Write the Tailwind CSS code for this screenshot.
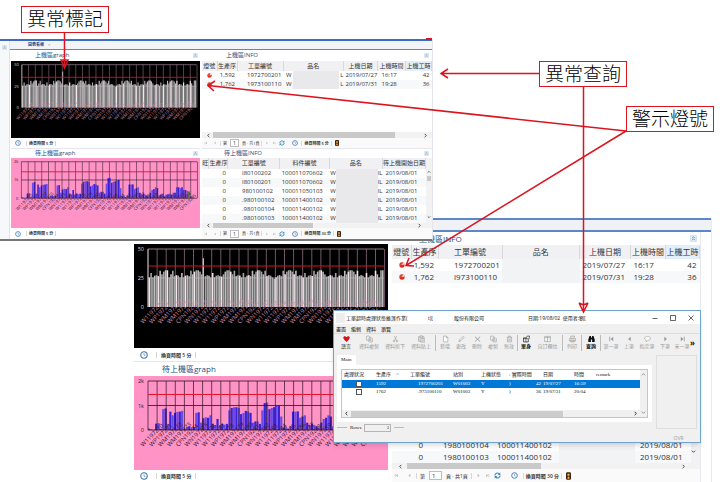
<!DOCTYPE html>
<html lang="zh-Hant">
<head>
  <meta charset="UTF-8" />
  <meta name="viewport" content="width=device-width, initial-scale=1" />
  <title>異常查詢 - 上機區看板</title>
  <script src="https://cdn.jsdelivr.net/npm/@tailwindcss/browser@4"></script>
</head>
<body class="bg-white font-['Open_Sans','Noto_Sans_CJK_TC',sans-serif] text-[#333]">
  <!-- Shared icons -->
  <svg class="hidden">
    <symbol id="i-clock" viewBox="0 0 12 12"><circle cx="6" cy="6" r="4.8" fill="#fff" stroke="#3f74b5" stroke-width="1.6"/><path d="M6 3.4V6.2L8 7" fill="none" stroke="#3f74b5" stroke-width="1"/></symbol>
    <symbol id="i-refresh" viewBox="0 0 12 12"><path d="M1.5 6A4.5 4.5 0 0 1 9 3M10.500 6A4.500 4.500 0 0 1 3 9" fill="none" stroke="#3b8fc4" stroke-width="1.9"/><path d="M10.800 .8V5H6.500zM1.200 11.200V7H5.500z" fill="#2f7db8"/></symbol>
    <symbol id="i-lamp" viewBox="0 0 12 12"><circle cx="6" cy="6" r="5.300" fill="#d9301c"/><path d="M6 6L8 1.200A5.300 5.300 0 0 1 11.200 5z" fill="#fbe3dc"/><circle cx="4.500" cy="4.500" r="1.600" fill="#f0785c"/></symbol>
    <symbol id="i-user" viewBox="0 0 8 12"><rect width="8" height="12" rx="2" fill="#3a2615"/><circle cx="4" cy="4" r="2" fill="#e9a23b"/><path d="M1.500 11V8.500L4 7L6.500 8.500V11z" fill="#b5402a"/><rect x="3" y="7" width="2" height="3" fill="#f3c64a"/></symbol>
    <symbol id="i-fold" viewBox="0 0 12 12"><rect x=".5" y=".5" width="11" height="11" rx="2" fill="#e2edf8" stroke="#bcd0e6"/><path d="M3.500 5.500L6 3L8.500 5.500M3.500 9L6 6.500L8.500 9" fill="none" stroke="#4f7db0" stroke-width="1.300"/></symbol>
    <symbol id="i-first" viewBox="0 0 12 12"><path d="M3 2V10" stroke="currentColor" stroke-width="1.400"/><path d="M9 2V10L4.500 6z" fill="currentColor"/></symbol>
    <symbol id="i-prev" viewBox="0 0 12 12"><path d="M8 2V10L3.500 6z" fill="currentColor"/></symbol>
    <symbol id="i-next" viewBox="0 0 12 12"><path d="M4 2V10L8.500 6z" fill="currentColor"/></symbol>
    <symbol id="i-last" viewBox="0 0 12 12"><path d="M9 2V10" stroke="currentColor" stroke-width="1.400"/><path d="M3 2V10L7.500 6z" fill="currentColor"/></symbol>
    <symbol id="i-left" viewBox="0 0 12 12"><path d="M8 2L4 6L8 10" fill="none" stroke="currentColor" stroke-width="2"/></symbol>
    <symbol id="i-right" viewBox="0 0 12 12"><path d="M4 2L8 6L4 10" fill="none" stroke="currentColor" stroke-width="2"/></symbol>
    <symbol id="i-up" viewBox="0 0 12 12"><path d="M2 8L6 4L10 8" fill="none" stroke="currentColor" stroke-width="2"/></symbol>
    <symbol id="i-down" viewBox="0 0 12 12"><path d="M2 4L6 8L10 4" fill="none" stroke="currentColor" stroke-width="2"/></symbol>
    <symbol id="i-copy" viewBox="0 0 12 12"><path d="M1 1H5.500L7 2.500V8H1zM5 4H9.500L11 5.500V11H5z" fill="#f4f4f4" stroke="currentColor"/><path d="M6.500 7H9.500M6.500 9H9.500" stroke="currentColor" stroke-width=".8"/></symbol>
  </svg>

  <main class="relative h-screen min-h-[482px] overflow-hidden">

    <!-- Enlarged dashboard -->
    <section class="absolute left-[132px] top-[218px] flex h-[264px] w-[580px] flex-col border-r border-[#e8e8ee] bg-white text-[8px] leading-[12px]">
      <div class="h-[2px] bg-[#5b87c7]"></div>
      <div class="h-[10px] bg-[#f0f1f5]"></div>
      <div class="h-[2px] bg-[#5b87c7]"></div>
      <div class="flex min-h-0 flex-1">
        <div class="flex w-[256px] flex-col pl-[2px] pt-[12px]">
          <svg data-chart="dark" viewBox="0 0 254 104" class="h-[104px] w-full bg-black"></svg>
          <div class="flex h-[13px] items-center gap-2 pl-[6px] text-[5px]">
            <svg class="size-2"><use href="#i-clock"/></svg>
            <span class="border-x border-[#d8d8d8] px-1 font-semibold leading-[6px]">換頁時間 5 分</span>
          </div>
          <h2 class="flex h-[15px] items-center border-t border-[#e6e6ea] pl-[28px] text-[#1d4f87]">待上機區graph</h2>
          <svg data-chart="pink" viewBox="0 0 254 94" class="h-[94px] w-full bg-[#ff93c6]"></svg>
          <div class="flex h-[12px] items-center gap-2 pl-[6px] text-[5px]">
            <svg class="size-2"><use href="#i-clock"/></svg>
            <span class="border-x border-[#d8d8d8] px-1 font-semibold leading-[6px]">換頁時間 5 分</span>
          </div>
        </div>
        <div class="ml-1 mr-[10px] flex flex-1 flex-col border-r border-[#e8e8ee]">
          <h2 class="flex h-[13px] items-center justify-between pl-[27px] pr-[3px] text-[#1d4f87]">上機區INFO
            <svg class="size-[7px]"><use href="#i-fold"/></svg>
          </h2>
          <table class="w-full table-fixed whitespace-nowrap">
            <thead class="bg-[#f1f1f3]">
              <tr class="h-[14px] [&>th]:border-r [&>th]:border-[#d9d9dc] [&>th]:font-normal">
                <th class="w-[19px]">燈號</th><th class="w-[27px]">生產序</th><th class="w-[64px]">工單編號</th><th>品名</th><th class="w-[51px]">上機日期</th><th class="w-[35px]">上機時間</th><th class="w-[34px] bg-[#e2eefa]">上機工時</th>
              </tr>
            </thead>
            <tbody>
              <tr>
                <td><svg class="mx-auto size-[6px]"><use href="#i-lamp"/></svg></td><td class="pr-1 text-right">1,592</td><td class="pl-4">1972700201</td><td class="bg-[#f2f3f5]"></td><td class="pl-[3px]">2019/07/27</td><td class="pl-[3px]">16:17</td><td class="pr-[3px] text-right">42</td>
              </tr>
              <tr class="bg-[#f7f8fa]">
                <td><svg class="mx-auto size-[6px]"><use href="#i-lamp"/></svg></td><td class="pr-1 text-right">1,762</td><td class="pl-4">l973100110</td><td class="bg-[#f2f3f5]"></td><td class="pl-[3px]">2019/07/31</td><td class="pl-[3px]">19:28</td><td class="pr-[3px] text-right">36</td>
              </tr>
            </tbody>
          </table>
          <div class="mt-auto flex">
            <table class="flex-1 table-fixed whitespace-nowrap">
              <tbody>
                <tr>
                  <td class="w-[31px] text-right">0</td><td class="w-[70px] pl-5">1980100104</td><td class="w-[66px] pl-1">100011400102</td><td class="w-[76px] bg-[#f2f3f5]"></td><td class="pl-[5px]">2019/08/01</td>
                </tr>
                <tr class="bg-[#f7f8fa]">
                  <td class="text-right">0</td><td class="pl-5">1980100103</td><td class="pl-1">100011400102</td><td class="bg-[#f2f3f5]"></td><td class="pl-[5px]">2019/08/01</td>
                </tr>
              </tbody>
            </table>
            <div class="flex w-[9px] items-center bg-[#f2f2f2]"><svg class="size-[5px]"><use href="#i-down"/></svg></div>
          </div>
          <div class="flex h-[6px] items-center bg-[#f2f2f2] pl-[6px] pr-[14px]">
            <svg class="size-[5px]"><use href="#i-left"/></svg>
            <div class="ml-1 h-[6px] w-[134px] bg-[#c9c9c9]"></div>
            <svg class="ml-auto size-[5px]"><use href="#i-right"/></svg>
          </div>
          <div class="flex h-[13px] items-center gap-1 bg-[#fafafa] pl-[2px] text-[5px] leading-[6px]">
            <button class="text-[#bbb]" aria-label="第一頁"><svg class="size-[5px]"><use href="#i-first"/></svg></button>
            <button class="ml-1 text-[#bbb]" aria-label="上一頁"><svg class="size-[5px]"><use href="#i-prev"/></svg></button>
            <label for="pageBig" class="border-l border-[#d8d8d8] pl-[3px]">第</label>
            <input id="pageBig" value="1" class="h-[9px] w-[13px] border border-[#bdbdbd] bg-white px-[2px] text-[6px]" />
            <span class="border-r border-[#d8d8d8] pr-[3px]">頁 · 共1頁</span>
            <button class="text-[#bbb]" aria-label="下一頁"><svg class="size-[5px]"><use href="#i-next"/></svg></button>
            <button class="text-[#bbb]" aria-label="最後頁"><svg class="size-[5px]"><use href="#i-last"/></svg></button>
            <button aria-label="重新整理"><svg class="size-[7px]"><use href="#i-refresh"/></svg></button>
            <svg class="ml-[6px] size-[7px]"><use href="#i-clock"/></svg>
            <span class="ml-px border-x border-[#d8d8d8] px-[2px] font-semibold">換頁時間 30 分</span>
            <svg class="h-2 w-[5px]"><use href="#i-user"/></svg>
          </div>
        </div>
      </div>
    </section>

    <!-- Dashboard overview -->
    <section class="absolute left-0 top-[39px] flex w-[433px] flex-col border-b-2 border-r border-b-[#777] border-r-[#e4e6ec] bg-white text-[6px] leading-[9px]">
      <div class="h-[2px] bg-[#3d6cc0]"></div>
      <div class="flex">
        <div class="w-[10px] border-r border-[#dfe3ea] bg-[#f7f8fa] pl-[2px] pt-1"><svg class="size-[5px]"><use href="#i-fold"/></svg></div>
        <div class="flex-1">
          <div class="flex h-[9px] items-center border-b border-[#5b87c7] bg-[#f3f4f7] pl-[18px]">
            <button class="flex items-center gap-1 text-[4px] font-bold leading-[8px] text-[#1d4f87]">圖表看板 <span class="font-normal text-[#789]">×</span></button>
          </div>
          <div class="flex">
            <div class="w-[190px] pl-px">
              <h2 class="flex h-[11px] items-center justify-between pl-6 pr-[2px] text-[#1d4f87]">上機區graph
                <svg class="size-[5px]"><use href="#i-fold"/></svg>
              </h2>
              <svg data-chart="dark" viewBox="0 0 254 104" class="h-[77px] w-full bg-black"></svg>
              <div class="flex h-[10px] items-center gap-[5px] pl-1 text-[4px]">
                <svg class="size-[6px]"><use href="#i-clock"/></svg>
                <span class="border-x border-[#d8d8d8] px-[2px] font-semibold leading-[5px]">換頁時間 5 分</span>
              </div>
              <h2 class="flex h-[10px] items-center justify-between border-t border-[#e6e6ea] pl-6 pr-[2px] text-[#1d4f87]">待上機區graph
                <svg class="size-[5px]"><use href="#i-fold"/></svg>
              </h2>
              <svg data-chart="pink" viewBox="0 0 254 94" class="h-[70px] w-full bg-[#ff93c6]"></svg>
              <div class="flex h-[11px] items-center gap-[5px] pl-1 text-[4px]">
                <svg class="size-[6px]"><use href="#i-clock"/></svg>
                <span class="border-x border-[#d8d8d8] px-[2px] font-semibold leading-[5px]">換頁時間 5 分</span>
              </div>
            </div>
            <div class="ml-[2px] flex flex-1 flex-col">
              <h2 class="flex h-[11px] items-center justify-between pl-6 pr-[3px] text-[#1d4f87]">上機區INFO
                <svg class="size-[5px]"><use href="#i-fold"/></svg>
              </h2>
              <table class="w-full table-fixed whitespace-nowrap">
                <thead class="bg-[#f1f1f3]">
                  <tr class="h-[10px] [&>th]:border-r [&>th]:border-[#d9d9dc] [&>th]:font-normal">
                    <th class="w-[15px]">燈號</th><th class="w-[20px]">生產序</th><th class="w-[46px]">工單編號</th><th>品名</th><th class="w-[34px]">上機日期</th><th class="w-[28px]">上機時間</th><th class="w-[26px] bg-[#e2eefa]">上機工時</th>
                  </tr>
                </thead>
                <tbody>
                  <tr>
                    <td><svg class="mx-auto size-[5px]"><use href="#i-lamp"/></svg></td><td class="pr-[2px] text-right">1,592</td><td class="pl-[10px]">1972700201</td><td><div class="flex gap-px pl-[3px]">W<span class="flex-1 bg-[#e9e9eb]"></span>L</div></td><td class="pl-[2px]">2019/07/27</td><td class="pl-1">16:17</td><td class="pr-[2px] text-right">42</td>
                  </tr>
                  <tr class="bg-[#f7f8fa]">
                    <td><svg class="mx-auto size-[5px]"><use href="#i-lamp"/></svg></td><td class="pr-[2px] text-right">1,762</td><td class="pl-[10px]">1973100110</td><td><div class="flex gap-px pl-[3px]">W<span class="flex-1 bg-[#e9e9eb]"></span>L</div></td><td class="pl-[2px]">2019/07/31</td><td class="pl-1">19:28</td><td class="pr-[2px] text-right">36</td>
                  </tr>
                </tbody>
              </table>
              <div class="mt-auto flex h-[6px] items-center bg-[#f2f2f2] px-1">
                <svg class="size-[5px]"><use href="#i-left"/></svg>
                <div class="ml-[2px] h-[6px] w-[182px] bg-[#c9c9c9]"></div>
                <svg class="ml-auto size-[5px]"><use href="#i-right"/></svg>
              </div>
              <div class="flex h-[10px] items-center gap-[3px] bg-[#fafafa] pl-[2px] text-[4px] leading-[5px]">
                <button class="text-[#bbb]" aria-label="第一頁"><svg class="size-1"><use href="#i-first"/></svg></button>
                <button class="ml-[2px] text-[#bbb]" aria-label="上一頁"><svg class="size-1"><use href="#i-prev"/></svg></button>
                <label for="pageTop" class="border-l border-[#d8d8d8] pl-[2px]">第</label>
                <input id="pageTop" value="1" class="h-[8px] w-[9px] border border-[#bdbdbd] bg-white px-[2px] text-[5px]" />
                <span class="border-r border-[#d8d8d8] pr-[2px]">頁 · 共1頁</span>
                <button class="text-[#bbb]" aria-label="下一頁"><svg class="size-1"><use href="#i-next"/></svg></button>
                <button class="text-[#bbb]" aria-label="最後頁"><svg class="size-1"><use href="#i-last"/></svg></button>
                <button aria-label="重新整理"><svg class="size-[6px]"><use href="#i-refresh"/></svg></button>
                <svg class="ml-1 size-[6px]"><use href="#i-clock"/></svg>
                <span class="border-x border-[#d8d8d8] px-[2px] font-semibold">換頁時間 5 分</span>
                <svg class="h-[6px] w-1"><use href="#i-user"/></svg>
              </div>
              <h2 class="flex h-[10px] items-center justify-between border-t border-[#e6e6ea] pl-[22px] pr-[3px] text-[#1d4f87]">待上機區INFO
                <svg class="size-[5px]"><use href="#i-fold"/></svg>
              </h2>
              <div class="flex">
                <table class="flex-1 table-fixed whitespace-nowrap">
                  <thead class="bg-[#f1f1f3]">
                    <tr class="h-[11px] [&>th]:border-r [&>th]:border-[#d9d9dc] [&>th]:font-normal">
                      <th class="w-[7px]">旺</th><th class="w-[18px]">生產序</th><th class="w-[52px]">工單編號</th><th class="w-[50px]">料件編號</th><th class="w-[56px]">品名</th><th>待上機開始日期</th>
                    </tr>
                  </thead>
                  <tbody>
                    <tr><td></td><td class="pr-[2px] text-right">0</td><td class="pl-[14px]">I80100202</td><td class="pl-[2px]">100011070602</td><td><div class="flex pl-px">W<span class="flex-1 bg-[#e9e9eb]"></span>IL</div></td><td class="pl-[3px]">2019/08/01</td></tr>
                    <tr class="bg-[#f7f8fa]"><td></td><td class="pr-[2px] text-right">0</td><td class="pl-[14px]">I80100201</td><td class="pl-[2px]">100011070602</td><td><div class="flex pl-px">W<span class="flex-1 bg-[#e9e9eb]"></span>IL</div></td><td class="pl-[3px]">2019/08/01</td></tr>
                    <tr><td></td><td class="pr-[2px] text-right">0</td><td class="pl-[14px]">980100102</td><td class="pl-[2px]">100011050103</td><td><div class="flex pl-px">W<span class="flex-1 bg-[#e9e9eb]"></span>IL</div></td><td class="pl-[3px]">2019/08/01</td></tr>
                    <tr class="bg-[#f7f8fa]"><td></td><td class="pr-[2px] text-right">0</td><td class="pl-[14px]">.980100102</td><td class="pl-[2px]">100011400102</td><td><div class="flex pl-px">W<span class="flex-1 bg-[#e9e9eb]"></span>IL</div></td><td class="pl-[3px]">2019/08/01</td></tr>
                    <tr><td></td><td class="pr-[2px] text-right">0</td><td class="pl-[14px]">.980100104</td><td class="pl-[2px]">100011400102</td><td><div class="flex pl-px">W<span class="flex-1 bg-[#e9e9eb]"></span>IL</div></td><td class="pl-[3px]">2019/08/01</td></tr>
                    <tr class="bg-[#f7f8fa]"><td></td><td class="pr-[2px] text-right">0</td><td class="pl-[14px]">.980100103</td><td class="pl-[2px]">100011400102</td><td><div class="flex pl-px">W<span class="flex-1 bg-[#e9e9eb]"></span>IL</div></td><td class="pl-[3px]">2019/08/01</td></tr>
                  </tbody>
                </table>
                <div class="flex w-[6px] flex-col items-center bg-[#f2f2f2] pt-3">
                  <svg class="size-1"><use href="#i-up"/></svg>
                  <div class="mt-[2px] h-[5px] w-1 bg-[#c9c9c9]"></div>
                  <svg class="mt-auto mb-1 size-1"><use href="#i-down"/></svg>
                </div>
              </div>
              <div class="flex h-[5px] items-center bg-[#f2f2f2] pl-1 pr-[10px]">
                <svg class="size-[5px]"><use href="#i-left"/></svg>
                <div class="ml-[2px] h-[5px] w-[100px] bg-[#c9c9c9]"></div>
                <svg class="ml-auto size-[5px]"><use href="#i-right"/></svg>
              </div>
              <div class="flex h-[11px] items-center gap-[3px] bg-[#fafafa] pl-[2px] text-[4px] leading-[5px]">
                <button class="text-[#bbb]" aria-label="第一頁"><svg class="size-1"><use href="#i-first"/></svg></button>
                <button class="ml-[2px] text-[#bbb]" aria-label="上一頁"><svg class="size-1"><use href="#i-prev"/></svg></button>
                <label for="pageBottom" class="border-l border-[#d8d8d8] pl-[2px]">第</label>
                <input id="pageBottom" value="1" class="h-[8px] w-[9px] border border-[#bdbdbd] bg-white px-[2px] text-[5px]" />
                <span class="border-r border-[#d8d8d8] pr-[2px]">頁 · 共1頁</span>
                <button class="text-[#bbb]" aria-label="下一頁"><svg class="size-1"><use href="#i-next"/></svg></button>
                <button class="text-[#bbb]" aria-label="最後頁"><svg class="size-1"><use href="#i-last"/></svg></button>
                <button aria-label="重新整理"><svg class="size-[6px]"><use href="#i-refresh"/></svg></button>
                <svg class="ml-1 size-[6px]"><use href="#i-clock"/></svg>
                <span class="border-x border-[#d8d8d8] px-[2px] font-semibold">換頁時間 30 分</span>
                <svg class="h-[6px] w-1"><use href="#i-user"/></svg>
              </div>
            </div>
          </div>
        </div>
      </div>
    </section>

    <!-- Query dialog -->
    <section class="absolute left-[333px] top-[310px] flex h-[133px] w-[368px] flex-col border border-[#6ea3d0] bg-[#f0f0f0] text-[5px] leading-[8px] text-[#111] shadow-md">
      <header class="flex h-[13px] items-center whitespace-pre bg-white pl-[2px]">
        <span class="h-[10px] w-[9px] bg-[#eee]"></span>
        <h1 class="w-[83px] pl-px">工單超時處理狀態維護作業(</h1>
        <span class="w-[26px]">t)[</span>
        <span class="w-[74px]">股份有限公司</span>
        <span>日期:19/08/02  使用者:劉[</span>
        <div class="ml-auto flex w-[54px] justify-around">
          <button aria-label="最小化"><svg viewBox="0 0 6 6" class="size-[6px]"><path d="M0.500 3.500H5.500" stroke="#222" stroke-width=".7"/></svg></button>
          <button aria-label="最大化"><svg viewBox="0 0 6 6" class="size-[6px]"><path d="M.5 .5H5.500V5.500H.5z" fill="none" stroke="#222" stroke-width=".7"/></svg></button>
          <button aria-label="關閉"><svg viewBox="0 0 6 6" class="size-[6px]"><path d="M.5 .5L5.500 5.500M5.500 .5L.5 5.500" stroke="#222" stroke-width=".7"/></svg></button>
        </div>
      </header>
      <nav class="flex h-[9px] items-center gap-[5px] pl-[2px]">
        <button>畫面</button><button>編輯</button><button>資料</button><button>瀏覽</button>
      </nav>
      <div class="flex h-[18px] items-center border-t border-[#dcdcdc] pl-[2px] text-[#9a9a9a] [&>button]:shrink-0 [&>button]:leading-[7px] [&_svg]:mx-auto [&_svg]:h-2 [&_svg]:w-[7px]">
        <button class="w-5 text-[#111]"><svg viewBox="0 0 12 12"><path d="M6 11C4 8.500 .5 6.500 .5 3.800C.5 .8 4.500 .3 6 3C7.500 .3 11.500 .8 11.500 3.800C11.500 6.500 8 8.500 6 11z" fill="#d8121c"/></svg>語言</button>
        <button class="w-[26px]"><svg><use href="#i-copy"/></svg>資料複製</button>
        <button class="w-[26px]"><svg viewBox="0 0 12 12"><path d="M4 1L7.500 8M8 1L4.500 8" stroke="currentColor" fill="none"/><circle cx="3.500" cy="9.500" r="1.500" fill="none" stroke="currentColor"/><circle cx="8.500" cy="9.500" r="1.500" fill="none" stroke="currentColor"/></svg>資料剪下</button>
        <button class="w-[26px]"><svg viewBox="0 0 12 12"><path d="M1 2H10V10H1z" fill="#ddd" stroke="currentColor"/><path d="M3.500 .5H7.500V3H3.500zM5 5H11.500V11.500H5z" fill="#f4f4f4" stroke="currentColor"/><path d="M6.500 7.500H10M6.500 9.500H10" stroke="currentColor"/></svg>資料貼上</button>
        <i class="mx-px h-4 w-px bg-[#bbb]"></i>
        <button class="w-4"><svg viewBox="0 0 12 12"><path d="M2.500 1H7.500L10 3.500V11H2.500zM7.500 1V3.500H10" fill="#fafafa" stroke="currentColor"/></svg>新增</button>
        <button class="w-4"><svg viewBox="0 0 12 12"><path d="M1.500 10.500L3 7L8.500 1.500L10.500 3.500L5 9z" fill="#eee" stroke="currentColor"/></svg>更改</button>
        <button class="w-4"><svg viewBox="0 0 12 12"><path d="M1.500 2L10.500 10.500M10.500 2L1.500 10.500" stroke="currentColor" stroke-width="1.500"/></svg>刪除</button>
        <button class="w-4"><svg><use href="#i-copy"/></svg>複製</button>
        <button class="w-4"><svg viewBox="0 0 12 12"><path d="M1.500 3H10.500M4.500 3V1H7.500V3M2.500 3V11H9.500V3M5 5V9.500M7 5V9.500" fill="none" stroke="currentColor"/></svg>無效</button>
        <i class="h-4 w-px bg-[#bbb]"></i>
        <button class="w-4 font-bold text-[#111]"><svg viewBox="0 0 12 12"><path d="M1 4H9V11H1z" fill="#fff" stroke="#111" stroke-width="1.200"/><path d="M1 5.500H9M5 5V11" stroke="#111"/><path d="M5 3.500L8 1H11.500V4L9.500 6" fill="#ddd" stroke="#111"/></svg>單身</button>
        <button class="w-[27px]"><svg viewBox="0 0 12 12"><path d="M1 1.500H11V10.500H1zM6 1.500V10.500M1 3.500H11" fill="none" stroke="currentColor"/></svg>自訂欄位</button>
        <i class="mx-px h-4 w-px bg-[#bbb]"></i>
        <button class="w-4"><svg viewBox="0 0 12 12"><path d="M3 5V1H9.500L8.500 5M1 5H11V9.500H1zM3 8H9V11H3z" fill="#e8e8e8" stroke="currentColor"/></svg>列印</button>
        <i class="mx-px h-4 w-px bg-[#bbb]"></i>
        <button class="w-4 font-bold text-[#111]"><svg viewBox="0 0 12 12"><path d="M2.500 1H5L5.500 4H6.500L7 1H9.500L11.500 7V11H7V7H5V11H.5V7z" fill="#111"/></svg>查詢</button>
        <i class="mx-px h-4 w-px bg-[#bbb]"></i>
        <button class="w-[18px]"><svg><use href="#i-first"/></svg>第一筆</button>
        <button class="w-[18px]"><svg><use href="#i-prev"/></svg>上筆</button>
        <button class="w-[18px]"><svg viewBox="0 0 12 12"><path d="M6 1.500C9 1.500 11 3 11 5S9 8.500 6.500 8.500L4 11V8.200C2 7.700 1 6.500 1 5S3 1.500 6 1.500z" fill="#fafafa" stroke="currentColor"/></svg>指定筆</button>
        <button class="w-[18px]"><svg><use href="#i-next"/></svg>下筆</button>
        <button class="w-4 whitespace-nowrap"><svg><use href="#i-last"/></svg>末一筆</button>
        <b class="text-[8px] text-[#111]">»</b>
      </div>
      <div class="flex flex-1 pl-[3px] pr-[3px] pt-1">
        <div class="w-[315px] font-['Liberation_Serif','Noto_Sans_CJK_TC',serif]">
          <button class="block h-[10px] bg-white px-1">Main</button>
          <div class="h-[57px] bg-white px-1 pt-1">
            <div class="flex h-[49px] border border-[#c4c4c4]">
              <div class="flex flex-1 flex-col">
                <table class="w-full table-fixed whitespace-nowrap">
                  <thead>
                    <tr class="h-[10px] [&>th]:text-left [&>th]:font-normal">
                      <th class="w-[34px] pl-[2px]">處理狀況</th><th class="w-[34px]">生產序 <span class="pl-1">^</span></th><th class="w-[43px]">工單編號</th><th class="w-[28px]">站別</th><th class="w-[28px]">上機狀態</th><th class="w-[34px]">: 實際時間</th><th class="w-[31px]">日期</th><th class="w-[22px]">時間</th><th>remark</th>
                    </tr>
                  </thead>
                  <tbody>
                    <tr class="bg-[#0078d7] text-white">
                      <td><input type="checkbox" aria-label="1592" class="mx-auto block size-[6px] appearance-none border border-[#555] bg-white" /></td><td>1592</td><td class="pl-2">1972700201</td><td>W01003</td><td>Y</td><td><div class="flex justify-between pr-[2px]">)<span>42</span></div></td><td>19/07/27</td><td>16:59</td><td></td>
                    </tr>
                    <tr>
                      <td><input type="checkbox" aria-label="1762" class="mx-auto block size-[6px] appearance-none border border-[#555] bg-white" /></td><td>1762</td><td class="pl-2">.973100110</td><td>W01003</td><td>Y</td><td><div class="flex justify-between pr-[2px]">)<span>36</span></div></td><td>19/07/31</td><td>20:04</td><td></td>
                    </tr>
                  </tbody>
                </table>
                <div class="mt-auto flex h-[7px] items-center bg-[#f0f0f0] px-[2px]">
                  <svg class="size-[5px]"><use href="#i-left"/></svg>
                  <div class="ml-[2px] h-[6px] w-[212px] bg-[#cdcdcd]"></div>
                  <svg class="ml-auto size-[5px]"><use href="#i-right"/></svg>
                </div>
              </div>
              <div class="flex w-[7px] flex-col items-center justify-between bg-[#f0f0f0] py-[2px] text-[#888]">
                <svg class="size-[5px]"><use href="#i-up"/></svg>
                <svg class="size-[5px]"><use href="#i-down"/></svg>
              </div>
            </div>
          </div>
          <div class="flex h-[11px] items-center gap-[3px]">
            <i class="h-px w-[10px] bg-[#bbb]"></i>
            <label for="rows">Rows</label>
            <input id="rows" value="2" readonly class="h-2 w-[27px] border border-[#b5b5b5] bg-[#f0f0f0] pr-px text-right" />
            <i class="h-px w-[10px] bg-[#bbb]"></i>
          </div>
        </div>
        <div class="ml-auto flex w-[41px] flex-col items-center justify-between">
          <div class="h-[74px] w-full border border-[#dedede]"></div>
          <span class="pl-1 text-[#999]">OVR</span>
        </div>
      </div>
    </section>

    <!-- Callouts -->
    <svg class="absolute left-0 top-0 h-[482px] w-[720px]" fill="none" stroke="#dc1420" stroke-width="1.5">
      <path d="M64.500 32V67M61 60L64.500 68L68 60z" />
      <path d="M539 73.500H441M448 69L441 73.500L448 78" />
      <path d="M583.500 86V311M579 303L583.500 312L588 303M583.500 305L579 303M583.500 305L588 303" />
      <path d="M626 131L208 85.500M215 81L208 85.500L214 91" />
      <path d="M626 131L406 265.500M409 258L406 265.500L414 266" />
      <path d="M426 39H432" stroke-width="2" />
    </svg>
    <div class="absolute left-[21px] top-[6px] border border-[#dc1420] bg-white px-[5px] text-[19px] font-light leading-[25px] text-black">異常標記</div>
    <div class="absolute left-[539px] top-[61px] border border-[#dc1420] bg-white px-[5px] text-[19px] font-light leading-[24px] text-black">異常查詢</div>
    <div class="absolute left-[626px] top-[106px] border border-[#dc1420] bg-white px-[5px] text-[19px] font-light leading-[24px] text-black">警示燈號</div>
  </main>

  <script>
    // Work order hours waiting per order, in thousands
    const waiting = [
      .06, .02, 0, .26, .28, .05, .85, .88, .25, .75, .6, .7, .74, .75, .78, .05, .12, .15, .1, .12,
      .7, .72, .3, .48, .52, .5, .6, .25, .2, .45, .2, .25, .22, .25, .8, .9, .93, .93, .9, .65,
      .7, .78, .75, .7, .3, .35, .35, .25, .8, 1.1, 1.12, .85, .9, .93, .98, 1, .55, .1, .12, .05,
      .15, .75, .75, .76, .5, .55, .6, .3, .2, .25, .2, .15, .1, .3, .45, .5, .6, .55, .15, .2,
      .25, .1, .2, .2, .25, .2, .3, .3, .6, .6, .55, .6, .45, .45, .4, .38, .1, .02
    ];

    const LEFT = 14, RIGHT = 250;
    const prefixes = ["W1197", "WP197", "WM197", "WM197", "CPN19", "WN197", "W1197"];

    function line(x1, y1, x2, y2, color, width) {
      return `<line x1="${x1}" y1="${y1}" x2="${x2}" y2="${y2}" stroke="${color}" stroke-width="${width}"/>`;
    }

    // Slanted order numbers under the axis
    function labels(y, color) {
      let out = "";
      for (let i = 0; i < 26; i++) {
        const x = LEFT - 5 + i * 8.8;
        out += `<text x="${x}" y="${y}" transform="rotate(-45 ${x} ${y})" font-size="6" fill="${color}">${prefixes[i % 7]}${270 + i}</text>`;
      }
      return out;
    }

    function axis(values, ys, color) {
      return values.map((v, i) => `<text x="10" y="${ys[i] + 2}" text-anchor="end" font-size="5.5" fill="${color}">${v}</text>`).join("");
    }

    function darkChart() {
      let out = "";
      for (let i = 0; i <= 26; i++) out += line(LEFT + i * 9.1, 5, LEFT + i * 9.1, 63, "#8d6f80", .8);
      out += line(LEFT, 5, RIGHT, 5, "#b79aaa", .8);
      for (let i = 0; i < 130; i++) {
        const x = LEFT + .5 + i * 1.81;
        let v = 25.5 + ((i * i * 7 + i * 3) % 17) / 2.6 - (i % 29 === 11 ? 5 : 0);
        if (i === 30) v = 42;
        out += `<rect x="${x}" y="${63 - v * 1.16}" width="${i === 30 ? 1 : 1.6}" height="${v * 1.16}" fill="${i % 5 === 0 ? "#f5e6ee" : i % 3 ? "#a6a6a6" : "#bdbdbd"}"/>`;
      }
      out += line(LEFT, 34, RIGHT, 34, "#c9bcc3", .6);
      out += line(LEFT, 22, RIGHT, 22, "#d8101c", 1.2);
      return out + line(LEFT, 5, LEFT, 63, "#ddd", .8) + labels(80, "#c98aa8") + axis([50, 25, 0], [5, 34, 63], "#ddd");
    }

    function pinkChart() {
      let out = "";
      waiting.forEach((v, i) => {
        out += `<rect x="${LEFT + i * 2.36}" y="${54 - v * 24.5}" width="2.2" height="${v * 24.5}" fill="${i === 95 ? "#3f8f3a" : i % 2 ? "#3b22d8" : "#6a4be6"}"/>`;
      });
      for (let i = 0; i <= 26; i++) out += line(LEFT + i * 9.1, 5, LEFT + i * 9.1, 54, "#2b1020", .7);
      [5, 29.5, 54].forEach(y => out += line(LEFT, y, RIGHT, y, "#2b1020", .8));
      out += line(LEFT, 18.5, RIGHT, 18.5, "#e0142c", 1.2);
      return out + labels(71, "#3a1830") + axis(["2k", "1k", 0], [5, 29.5, 54], "#3a1028");
    }

    document.querySelectorAll("[data-chart]").forEach(svg => {
      svg.innerHTML = svg.dataset.chart === "dark" ? darkChart() : pinkChart();
    });
  </script>
</body>
</html>
